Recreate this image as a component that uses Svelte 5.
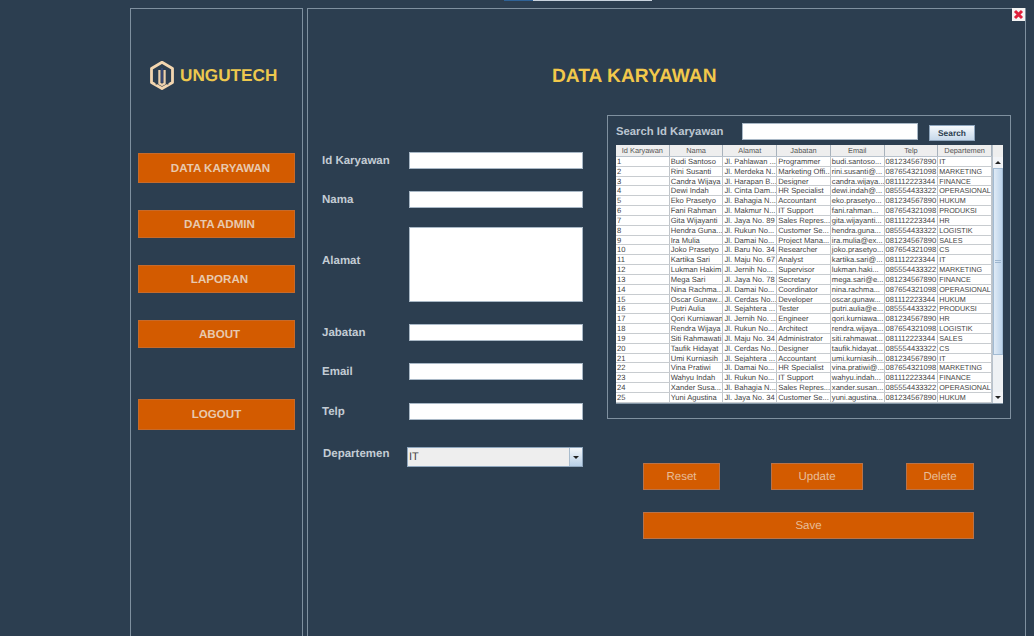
<script lang="ts">
  // rows exactly as the JTable shows them, clipped text included
  const columns = ['Id Karyawan', 'Nama', 'Alamat', 'Jabatan', 'Email', 'Telp', 'Departemen'];
  const rows = [
    ['1', 'Budi Santoso', 'Jl. Pahlawan ...', 'Programmer', 'budi.santoso...', '081234567890', 'IT'],
    ['2', 'Rini Susanti', 'Jl. Merdeka N...', 'Marketing Offi...', 'rini.susanti@...', '087654321098', 'MARKETING'],
    ['3', 'Candra Wijaya', 'Jl. Harapan B...', 'Designer', 'candra.wijaya...', '081112223344', 'FINANCE'],
    ['4', 'Dewi Indah', 'Jl. Cinta Dam...', 'HR Specialist', 'dewi.indah@...', '085554433322', 'OPERASIONAL'],
    ['5', 'Eko Prasetyo', 'Jl. Bahagia N...', 'Accountant', 'eko.prasetyo...', '081234567890', 'HUKUM'],
    ['6', 'Fani Rahman', 'Jl. Makmur N...', 'IT Support', 'fani.rahman...', '087654321098', 'PRODUKSI'],
    ['7', 'Gita Wijayanti', 'Jl. Jaya No. 89', 'Sales Repres...', 'gita.wijayanti...', '081112223344', 'HR'],
    ['8', 'Hendra Guna...', 'Jl. Rukun No...', 'Customer Se...', 'hendra.guna...', '085554433322', 'LOGISTIK'],
    ['9', 'Ira Mulia', 'Jl. Damai No...', 'Project Mana...', 'ira.mulia@ex...', '081234567890', 'SALES'],
    ['10', 'Joko Prasetyo', 'Jl. Baru No. 34', 'Researcher', 'joko.prasetyo...', '087654321098', 'CS'],
    ['11', 'Kartika Sari', 'Jl. Maju No. 67', 'Analyst', 'kartika.sari@...', '081112223344', 'IT'],
    ['12', 'Lukman Hakim', 'Jl. Jernih No...', 'Supervisor', 'lukman.haki...', '085554433322', 'MARKETING'],
    ['13', 'Mega Sari', 'Jl. Jaya No. 78', 'Secretary', 'mega.sari@e...', '081234567890', 'FINANCE'],
    ['14', 'Nina Rachma...', 'Jl. Damai No...', 'Coordinator', 'nina.rachma...', '087654321098', 'OPERASIONAL'],
    ['15', 'Oscar Gunaw...', 'Jl. Cerdas No...', 'Developer', 'oscar.gunaw...', '081112223344', 'HUKUM'],
    ['16', 'Putri Aulia', 'Jl. Sejahtera ...', 'Tester', 'putri.aulia@e...', '085554433322', 'PRODUKSI'],
    ['17', 'Qori Kurniawan', 'Jl. Jernih No. ...', 'Engineer', 'qori.kurniawa...', '081234567890', 'HR'],
    ['18', 'Rendra Wijaya', 'Jl. Rukun No...', 'Architect', 'rendra.wijaya...', '087654321098', 'LOGISTIK'],
    ['19', 'Siti Rahmawati', 'Jl. Maju No. 34', 'Administrator', 'siti.rahmawat...', '081112223344', 'SALES'],
    ['20', 'Taufik Hidayat', 'Jl. Cerdas No...', 'Designer', 'taufik.hidayat...', '085554433322', 'CS'],
    ['21', 'Umi Kurniasih', 'Jl. Sejahtera ...', 'Accountant', 'umi.kurniasih...', '081234567890', 'IT'],
    ['22', 'Vina Pratiwi', 'Jl. Damai No...', 'HR Specialist', 'vina.pratiwi@...', '087654321098', 'MARKETING'],
    ['23', 'Wahyu Indah', 'Jl. Rukun No...', 'IT Support', 'wahyu.indah...', '081112223344', 'FINANCE'],
    ['24', 'Xander Susa...', 'Jl. Bahagia N...', 'Sales Repres...', 'xander.susan...', '085554433322', 'OPERASIONAL'],
    ['25', 'Yuni Agustina', 'Jl. Jaya No. 34', 'Customer Se...', 'yuni.agustina...', '081234567890', 'HUKUM']
  ];
</script>

<div class="page">
  <div class="strip"><span class="strip-blue"></span><span class="strip-white"></span></div>

  <div class="frame">
    <aside class="sidebar">
      <div class="brand">
        <svg class="logo" viewBox="0 0 26 30" width="26" height="30" fill="none">
          <path d="M2.5 22.5V8.5L13 2.3L23.5 8.5V22.5L13 28.5Z" stroke="#f3d6b0" stroke-width="2.8" stroke-linejoin="round" />
          <path d="M7.4 24.5V10.5L13 7.2L18.6 10.5V24.5" stroke="#2c3e50" stroke-width="1.6" />
          <path d="M10.4 10V23.5L13 25L15.6 23.5V10" stroke="#ecd0ac" stroke-width="2.2" />
          <path d="M13 8V22.5" stroke="#3d4a80" stroke-width="1.4" />
        </svg>
        <span>UNGUTECH</span>
      </div>
      <nav class="menu">
        <button class="nav tall shift">DATA KARYAWAN</button>
        <button class="nav">DATA ADMIN</button>
        <button class="nav">LAPORAN</button>
        <button class="nav">ABOUT</button>
        <button class="nav logout">LOGOUT</button>
      </nav>
    </aside>

    <main class="panel">
      <h1>DATA KARYAWAN</h1>
      <div class="columns">
        <form class="form">
          <label class="label" for="id">Id Karyawan</label>
          <input id="id" class="field" />
          <label class="label" for="nama">Nama</label>
          <input id="nama" class="field" />
          <label class="label alamat" for="alamat">Alamat</label>
          <textarea id="alamat" class="field area"></textarea>
          <label class="label" for="jabatan">Jabatan</label>
          <input id="jabatan" class="field" />
          <label class="label" for="email">Email</label>
          <input id="email" class="field" />
          <label class="label" for="telp">Telp</label>
          <input id="telp" class="field" />
          <span class="label dept">Departemen</span>
          <div class="combo">
            <span class="combo-value">IT</span>
            <span class="combo-arrow"><i class="down"></i></span>
          </div>
        </form>

        <div class="right">
          <section class="search-panel">
            <div class="search-row">
              <span class="search-label">Search Id Karyawan</span>
              <input class="search-input" />
              <button class="search-btn">Search</button>
            </div>
            <div class="table-wrap">
              <div class="table">
                <div class="row head">
                  {#each columns as c}
                    <div class="cell">{c}</div>
                  {/each}
                </div>
                {#each rows as r}
                  <div class="row">
                    {#each r as v}
                      <div class="cell">{v}</div>
                    {/each}
                  </div>
                {/each}
              </div>
              <div class="scrollbar">
                <div class="sb-corner"></div>
                <div class="sb-btn"><i class="up"></i></div>
                <div class="sb-thumb"><span class="grip"></span></div>
                <div class="sb-track"></div>
                <div class="sb-btn"><i class="down"></i></div>
              </div>
            </div>
          </section>

          <div class="actions">
            <button class="act reset">Reset</button>
            <button class="act update">Update</button>
            <button class="act del">Delete</button>
            <button class="act save">Save</button>
          </div>
        </div>
      </div>

      <button class="close" aria-label="close">
        <svg viewBox="0 0 13 13" width="13" height="13">
          <path d="M3 3L10 10M10 3L3 10" stroke="#e0203c" stroke-width="3" />
        </svg>
      </button>
    </main>
  </div>
</div>

<style>
  :global(body) {
    margin: 0;
    background: #2c3e50;
  }

  .page {
    width: 1034px;
    height: 636px;
    overflow: hidden;
    background: #2c3e50;
    font-family: 'Liberation Sans', Arial, sans-serif;
    text-rendering: geometricPrecision;
    box-sizing: border-box;
  }

  .strip {
    display: flex;
    height: 1px;
    padding-left: 504px;
  }
  .strip-blue {
    width: 29px;
    background: #2f6296;
  }
  .strip-white {
    width: 119px;
    background: #c9d3de;
  }

  .frame {
    display: flex;
    gap: 4px;
    margin: 7px 8px 0 130px;
    height: 640px;
  }

  .sidebar {
    width: 173px;
    box-sizing: border-box;
    border: 1px solid #7f909f;
    padding: 0 7px;
  }

  .brand {
    display: flex;
    align-items: center;
    gap: 5px;
    margin: 51px 0 0 11px;
    height: 30px;
    color: #edc84e;
    font-size: 17.2px;
    font-weight: bold;
    white-space: nowrap;
  }
  .logo {
    flex: none;
  }

  .menu {
    display: flex;
    flex-direction: column;
    margin-top: 63px;
  }

  button {
    font-family: inherit;
    text-rendering: inherit;
    border: 0;
    padding: 0;
  }

  .nav {
    width: 157px;
    height: 28px;
    margin-bottom: 27px;
    background: #d35b00;
    border: 1px solid #c76a2a;
    color: #e8c9ae;
    font-size: 11.6px;
    font-weight: bold;
    padding-left: 6px;
    box-sizing: border-box;
  }
  .nav.tall {
    height: 30px;
  }
  .nav.shift {
    padding-left: 8px;
  }
  .nav.logout {
    height: 31px;
    margin: 24px 0 0;
    padding-left: 0;
  }

  .panel {
    position: relative;
    flex: 1;
    box-sizing: border-box;
    border: 1px solid #7f909f;
    padding: 0 0 0 14px;
  }

  h1 {
    margin: 57px 0 0 0;
    height: 22px;
    padding-left: 230px;
    color: #f2c84b;
    font-size: 19.2px;
    line-height: 22px;
    font-weight: bold;
  }

  .columns {
    display: flex;
    gap: 24px;
    margin-top: 27px;
  }

  .form {
    width: 261px;
    display: grid;
    grid-template-columns: 87px 174px;
    grid-template-rows: 39px 36px 97px 39px 40px 44px 20px;
    align-items: start;
    margin-top: 37px;
  }
  .label {
    margin-top: 1px;
    color: #c3ccd4;
    font-size: 11.5px;
    line-height: 17px;
    font-weight: bold;
  }
  .alamat {
    margin-top: 26px;
  }
  .dept {
    margin: -1px 0 0 1px;
  }
  .field {
    box-sizing: border-box;
    width: 174px;
    height: 17px;
    margin: 0;
    padding: 0;
    border: 1px solid #a9b8c6;
    background: #fff;
    border-radius: 0;
    outline: 0;
    resize: none;
    display: block;
  }
  .area {
    height: 75px;
  }

  .combo {
    display: flex;
    box-sizing: border-box;
    width: 176px;
    height: 20px;
    margin-left: -2px;
    border: 1px solid #8fa6bd;
    background: #eeeeee;
  }
  .combo-value {
    flex: 1;
    padding-left: 1px;
    color: #444;
    font-size: 11px;
    line-height: 19px;
  }
  .combo-arrow {
    width: 12px;
    display: flex;
    align-items: center;
    justify-content: center;
    background: linear-gradient(#f4f7fa, #b8d0e8);
    border-left: 1px solid #a9bccd;
  }

  .down,
  .up {
    display: block;
    width: 0;
    height: 0;
    border-left: 3px solid transparent;
    border-right: 3px solid transparent;
  }
  .down {
    border-top: 3px solid #222;
  }
  .up {
    border-bottom: 3px solid #222;
  }

  .right {
    width: 404px;
  }

  .search-panel {
    box-sizing: border-box;
    width: 404px;
    height: 304px;
    border: 1px solid #7f909f;
    padding: 7px 8px 0;
  }
  .search-row {
    display: flex;
    align-items: flex-start;
    height: 17px;
  }
  .search-label {
    width: 126px;
    margin-top: 1px;
    color: #bcc6d0;
    font-size: 11.3px;
    line-height: 17px;
    font-weight: bold;
  }
  .search-input {
    box-sizing: border-box;
    width: 176px;
    height: 17px;
    margin: 0 11px 0 0;
    padding: 0;
    border: 1px solid #a9b8c6;
    border-radius: 0;
    background: #fff;
    outline: 0;
  }
  .search-btn {
    box-sizing: border-box;
    width: 46px;
    height: 16px;
    margin-top: 2px;
    background: linear-gradient(#f6f9fc, #c6d8ea);
    border: 1px solid #8fa6bd;
    color: #2c3e50;
    font-size: 8.4px;
    font-weight: bold;
  }

  .table-wrap {
    display: flex;
    width: 387px;
    margin-top: 5px;
    box-sizing: border-box;
    border-bottom: 1px solid #8496a6;
    background: #fff;
  }
  .table {
    width: 376px;
    border-right: 1px solid #b8c2cc;
  }
  .row {
    display: grid;
    grid-template-columns: repeat(7, 1fr);
    height: 9.84px;
    box-sizing: border-box;
    border-bottom: 1px solid #c8ccd0;
    background: #fff;
  }
  .cell {
    padding-left: 1px;
    overflow: hidden;
    white-space: nowrap;
    color: #444;
    font-size: 7.6px;
    line-height: 9px;
    border-right: 1px solid #c0c5ca;
    box-sizing: border-box;
  }
  .cell:last-child {
    font-size: 7.2px;
  }
  .row.head {
    height: 12px;
    background: #eeeeee;
    border-bottom: 1px solid #b8c2cc;
  }
  .head .cell {
    padding: 0;
    font-size: 7.4px;
    text-align: center;
    line-height: 11px;
    color: #555;
    border-right: 1px solid #a8b2bc;
  }

  .scrollbar {
    width: 10px;
    display: flex;
    flex-direction: column;
    background: #eef1f4;
  }
  .sb-corner {
    height: 12px;
    background: #eeeeee;
  }
  .sb-btn {
    height: 11px;
    display: flex;
    align-items: center;
    justify-content: center;
    background: #f2f4f7;
  }
  .sb-thumb {
    height: 187px;
    display: flex;
    align-items: center;
    justify-content: center;
    background: linear-gradient(90deg, #dfeaf5, #bcd3ea);
    border: 1px solid #a2bbd3;
    box-sizing: border-box;
  }
  .grip {
    width: 6px;
    height: 4px;
    background: repeating-linear-gradient(#9db6cf 0 1px, transparent 1px 2px);
  }
  .sb-track {
    flex: 1;
    background: #eef1f4;
  }

  .actions {
    display: grid;
    grid-template-columns: 77px 51px 92px 43px 68px;
    grid-template-rows: 27px 27px;
    row-gap: 22px;
    width: 331px;
    margin: 44px 0 0 36px;
  }
  .act {
    background: #d35b00;
    border: 1px solid #b8734a;
    box-sizing: border-box;
    color: #e8bd98;
    font-size: 11.5px;
  }
  .reset {
    grid-column: 1;
  }
  .update {
    grid-column: 3;
  }
  .del {
    grid-column: 5;
  }
  .save {
    grid-column: 1 / -1;
    grid-row: 2;
  }

  .close {
    position: absolute;
    top: -1px;
    right: 0;
    width: 13px;
    height: 13px;
    background: #f4f4f4;
    display: block;
  }
  .close svg {
    display: block;
  }
</style>
